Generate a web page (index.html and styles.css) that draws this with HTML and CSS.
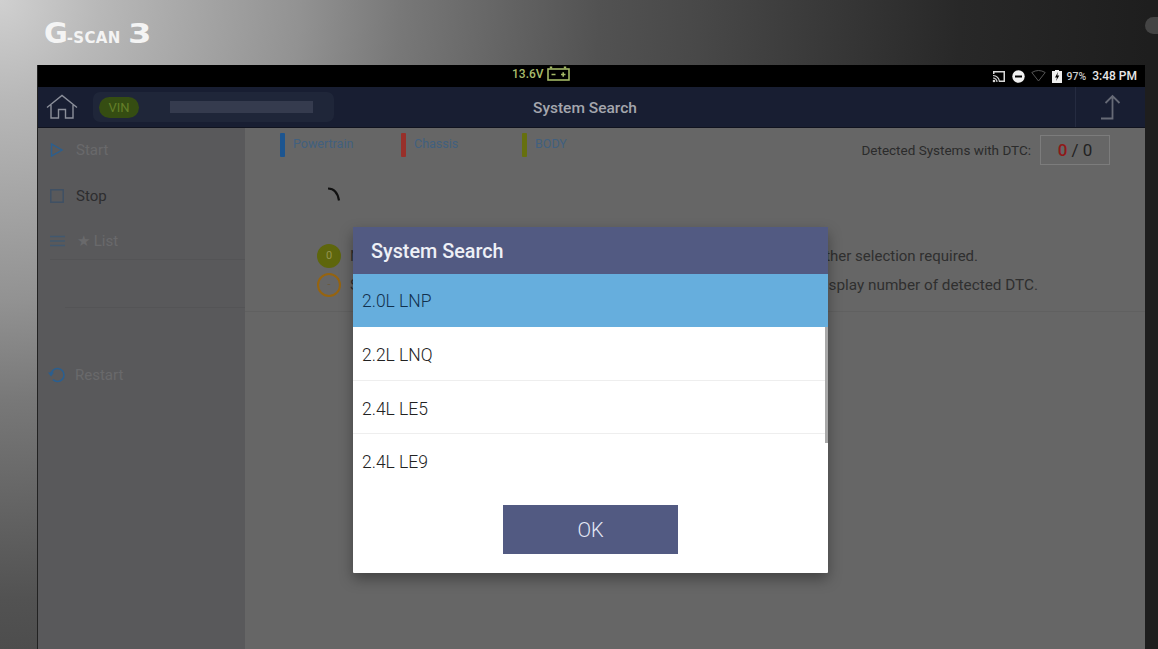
FILE: index.html
```html
<!DOCTYPE html>
<html lang="en">
<head>
<meta charset="UTF-8" />
<title>G-scan 3 System Search</title>
<link rel="stylesheet" href="styles.css">
</head>
<body>
<header class="brand">
  <div class="logo"><span class="logo-g">G</span><span class="logo-scan">-scan</span><span class="logo-num">3</span></div>
  <span class="cam-dot"></span>
</header>

<main class="screen">
  <div class="status">
    <div class="status-volt">
      <span>13.6V</span>
      <svg class="batt-icon" width="23" height="15" viewBox="0 0 23 15" fill="none" stroke="#a3b866" stroke-width="1.600">
        <path d="M4 2.500V.5M18 2.500V.5" stroke-width="2.400"/>
        <rect x="1" y="3" width="21" height="11"/>
        <path d="M4.500 8.500h4M14 8.500h4.500M16.200 6.300v4.400"/>
      </svg>
    </div>
    <div class="status-right">
      <svg width="14" height="13" viewBox="0 0 14 13">
        <path d="M1 1h12v11H7.500V10.500h4V2.500H2.500V4H1z" fill="#d8d8d8"/>
        <path d="M1 5.500a6.500 6.500 0 0 1 6.500 6.500M1 8a4 4 0 0 1 4 4" fill="none" stroke="#d8d8d8" stroke-width="1.200"/>
        <circle cx="2" cy="11" r="1.300" fill="#d8d8d8"/>
      </svg>
      <svg class="dnd" width="13" height="13" viewBox="0 0 13 13">
        <circle cx="6.500" cy="6.500" r="6.200" fill="#f0f0f0"/>
        <rect x="3" y="5.500" width="7" height="2" fill="#000"/>
      </svg>
      <svg class="wifi" width="15" height="12" viewBox="0 0 15 12">
        <path d="M.8 2.500Q7.500-1.500 14.200 2.500L7.500 11z" fill="none" stroke="#555" stroke-width="1"/>
      </svg>
      <svg width="10" height="13" viewBox="0 0 10 13">
        <path d="M3 0h4v1h3v12H0V1h3z" fill="#eee"/>
        <path d="M6 2 3 7.500h2L4 11 7.300 5.500h-2z" fill="#000"/>
      </svg>
      <span class="batt-pct">97%</span>
      <span class="clock">3:48 PM</span>
    </div>
  </div>

  <div class="topbar">
    <svg class="home" width="32" height="26" viewBox="0 0 32 26" fill="none" stroke="#8b8f9a" stroke-width="1.400">
      <path d="M1 13.500 16 1.500l15 12M5 11v13h7.500v-8.500h7V24H27V11"/>
    </svg>
    <div class="vin-box">
      <span class="vin">VIN</span>
      <span class="vin-value"></span>
    </div>
    <h2 class="topbar-title">System Search</h2>
    <div class="topbar-up">
      <svg width="22" height="26" viewBox="0 0 22 26" fill="none" stroke="#666a76" stroke-width="1.800">
        <path d="M1 24.500h11.500V2M5.500 9l7-7 7 7"/>
      </svg>
    </div>
  </div>

  <div class="body">
    <aside class="side">
      <div class="side-item is-first">
        <svg width="14" height="14" viewBox="0 0 14 14" fill="none" stroke="#2a5f90" stroke-width="1.400"><path d="M1.500 1v12L12 7z"/></svg>
        <span class="dim">Start</span>
      </div>
      <div class="side-item">
        <svg width="14" height="14" viewBox="0 0 14 14" fill="none" stroke="#3f5064" stroke-width="1.500"><rect x=".8" y=".8" width="12.400" height="12.400"/></svg>
        <span class="on">Stop</span>
      </div>
      <div class="side-item">
        <svg width="15" height="12" viewBox="0 0 15 12" fill="none" stroke="#42586e" stroke-width="1.500"><path d="M0 1.500h15M0 6h15M0 10.500h15"/></svg>
        <span class="dim">★ List</span>
      </div>
      <div class="side-rule"></div>
      <div class="side-rule side-rule-short"></div>
      <div class="side-item side-restart">
        <svg width="18" height="16" viewBox="0 0 18 16" fill="none" stroke="#2a5f90" stroke-width="1.600">
          <path d="M3 7.500A6.500 6.500 0 1 1 9.500 14.500 6.500 6.500 0 0 1 5 12.700"/>
          <path d="M0 5.500h6L3 9.500z" fill="#2a5f90" stroke="none"/>
        </svg>
        <span class="dim">Restart</span>
      </div>
    </aside>

    <section class="content">
      <div class="legend">
        <div class="legend-item"><span class="bar bar-blue"></span><span class="legend-name">Powertrain</span></div>
        <div class="legend-item"><span class="bar bar-red"></span><span class="legend-name">Chassis</span></div>
        <div class="legend-item"><span class="bar bar-olive"></span><span class="legend-name">BODY</span></div>
        <div class="detected">
          <span>Detected Systems with DTC:</span>
          <span class="count"><b>0</b> / 0</span>
        </div>
      </div>

      <svg class="spinner" width="16" height="16" viewBox="0 0 16 16" fill="none" stroke="#111" stroke-width="2.200"><path d="M2 1.500q9 0 11 12"/></svg>

      <div class="key">
        <div class="key-row">
          <span class="dot dot-olive">0</span>
          <p class="key-text"><span>No DTC found, no</span><span>further selection required.</span></p>
        </div>
        <div class="key-row">
          <span class="dot dot-ring">-</span>
          <p class="key-text"><span>Searched systems</span><span>display number of detected DTC.</span></p>
        </div>
      </div>
      <div class="content-rule"></div>
    </section>
  </div>

  <div class="dialog">
    <h3 class="dialog-title">System Search</h3>
    <ul class="options">
      <li class="selected">2.0L LNP</li>
      <li>2.2L LNQ</li>
      <li>2.4L LE5</li>
      <li>2.4L LE9</li>
    </ul>
    <span class="scroll-thumb"></span>
    <div class="dialog-foot"><button class="ok">OK</button></div>
  </div>
</main>
</body>
</html>
```

FILE: styles.css
```css
* { margin: 0; padding: 0; box-sizing: border-box; }

html, body { height: 100%; overflow: hidden; }

body {
  width: 1158px;
  height: 649px;
  font-family: Roboto, "Liberation Sans", sans-serif;
  background:
    radial-gradient(circle at 0 0, #d0d0d0 0, #b8b8b8 100px, #929292 300px, #787878 400px, #525252 600px, #484848 700px, #282828 960px, #1e1e1e 1150px);
}

.brand {
  height: 65px;
  padding: 17px 0 0 44px;
  display: flex;
  justify-content: space-between;
  align-items: flex-start;
}
.logo {
  color: #f4f4f4;
  font-family: "DejaVu Sans", sans-serif;
  font-weight: 700;
  display: flex;
  align-items: baseline;
  line-height: 32px;
}
.logo-g { font-size: 29px; }
.logo-scan { font-size: 15px; text-transform: uppercase; letter-spacing: 0.3px; margin-left: -1px; }
.logo-num { font-size: 27px; margin-left: 7px; transform: scaleX(1.25); transform-origin: left; }
.cam-dot {
  width: 26px;
  height: 17px;
  border-radius: 13px;
  background: #444;
  margin-right: -13px;
}

.screen {
  position: relative;
  margin-left: 38px;
  width: 1107px;
  height: 584px;
  display: flex;
  flex-direction: column;
  box-shadow: -1px 0 0 #222;
}

.status {
  height: 22px;
  background: #000;
  position: relative;
  display: flex;
  justify-content: flex-end;
  align-items: center;
  padding-right: 8px;
  color: #e8e8e8;
  font-size: 12px;
  font-weight: 500;
}
.status-volt {
  position: absolute;
  left: 474px;
  top: 1px;
  color: #a8bc6c;
  display: flex;
  align-items: center;
  gap: 3px;
  font-size: 12px;
}
.status-right { display: flex; align-items: center; gap: 6px; }
.batt-pct { font-size: 10.500px; color: #ccc; margin: 0 0 0 -1px; }
.clock { margin-left: 0; }

.topbar {
  height: 41px;
  background: #181e32;
  border-bottom: 1px solid #10131f;
  display: flex;
  align-items: center;
  padding-left: 8px;
  position: relative;
}
.vin-box {
  margin-left: 15px;
  width: 241px;
  height: 30px;
  border-radius: 7px;
  background: #1f2639;
  display: flex;
  align-items: center;
  padding-left: 6px;
}
.vin {
  width: 40px;
  height: 21px;
  border-radius: 11px;
  background: #354d12;
  color: #647f28;
  font-size: 13px;
  text-align: center;
  line-height: 21px;
}
.vin-value {
  width: 143px;
  height: 12px;
  margin-left: 31px;
  background: #353b4e;
}
.topbar-title {
  position: absolute;
  left: 495px;
  top: 12px;
  color: #a4a6ad;
  font-size: 15.500px;
  font-weight: 500;
}
.topbar-up {
  margin-left: auto;
  width: 70px;
  height: 100%;
  border-left: 1px solid #252b40;
  display: flex;
  align-items: center;
  justify-content: center;
}

.body { flex: 1; display: flex; min-height: 0; }

.side {
  width: 207px;
  background: #59595b;
  padding-left: 12px;
  display: flex;
  flex-direction: column;
  font-size: 15px;
}
.side-item {
  display: flex;
  align-items: center;
  gap: 12px;
  height: 24px;
  margin-top: 22px;
}
.side-item.is-first { margin-top: 10px; }
.side-item + .side-item + .side-item { margin-top: 21px; }
.side-restart { margin-top: 55px; margin-left: -2px; gap: 9px; }
.side-rule { height: 1px; background: #545456; margin-top: 6px; }
.side-rule-short { margin: 47px 0 0 15px; }
.dim { color: #69696b; }
.on { color: #2d2d2f; }

.content { flex: 1; background: #666; position: relative; min-width: 0; }

.legend {
  display: flex;
  padding: 5px 35px 0 35px;
  height: 40px;
  position: relative;
}
.legend-item { display: flex; gap: 8px; width: 121px; }
.bar { width: 5px; height: 24px; border-radius: 1px; }
.bar-blue { background: #1c5590; }
.bar-red { background: #98302a; }
.bar-olive { background: #66700f; }
.legend-name { font-size: 12.500px; color: #41607f; line-height: 21px; }
.detected {
  margin-left: auto;
  display: flex;
  align-items: center;
  gap: 9px;
  font-size: 13.500px;
  color: #2b2b2b;
  height: 30px;
  margin-top: 2px;
}
.count {
  width: 70px;
  height: 30px;
  border: 1px solid #7c7c7c;
  text-align: center;
  line-height: 28px;
  font-size: 17px;
  color: #222;
}
.count b { color: #901818; font-weight: 500; }

.spinner { display: block; margin: 19px 0 0 81px; }

.key { margin: 41px 0 0 72px; display: flex; flex-direction: column; gap: 4.500px; }
.key-row { display: flex; align-items: center; gap: 9px; height: 24px; }
.dot {
  width: 24px;
  height: 24px;
  border-radius: 50%;
  font-size: 11px;
  text-align: center;
  line-height: 24px;
  flex-shrink: 0;
}
.dot-olive { background: #5e660c; color: #949450; }
.dot-ring { border: 2px solid #96640f; color: #6a5a40; line-height: 20px; }
.key-text {
  width: 628px;
  display: flex;
  justify-content: space-between;
  font-size: 15px;
  color: #2f2f2f;
}
.key-row + .key-row .key-text { width: 688px; font-size: 15.300px; }

.content-rule { height: 1px; background: #606060; margin-top: 14px; }

.dialog {
  position: absolute;
  left: 315px;
  top: 162px;
  width: 475px;
  height: 346px;
  background: #fff;
  box-shadow: 0 6px 14px rgba(0, 0, 0, 0.35);
  display: flex;
  flex-direction: column;
  border-radius: 1px;
}
.dialog-title {
  height: 47px;
  background: #525a82;
  color: #eef0f6;
  font-size: 19.800px;
  font-weight: 500;
  line-height: 50px;
  padding-left: 18px;
}
.options { list-style: none; height: 213px; overflow: hidden; }
.options li {
  height: 53.400px;
  line-height: 57px;
  padding-left: 9px;
  font-size: 17.500px;
  font-weight: 300;
  color: #222;
  border-bottom: 1px solid #eee;
}
.options li.selected { background: #66aedd; color: #12314d; border-bottom: 0; line-height: 55px; }
.options li:last-child { border-bottom: 0; }
.scroll-thumb {
  position: absolute;
  right: 0;
  top: 100px;
  width: 3px;
  height: 116px;
  background: #a8a8a8;
}
.dialog-foot { flex: 1; display: flex; justify-content: center; padding-top: 18px; }
.ok {
  width: 175px;
  height: 49px;
  background: #525a82;
  border: 0;
  color: #e4e8f6;
  font-family: inherit;
  font-size: 20px;
  font-weight: 300;
}
```
